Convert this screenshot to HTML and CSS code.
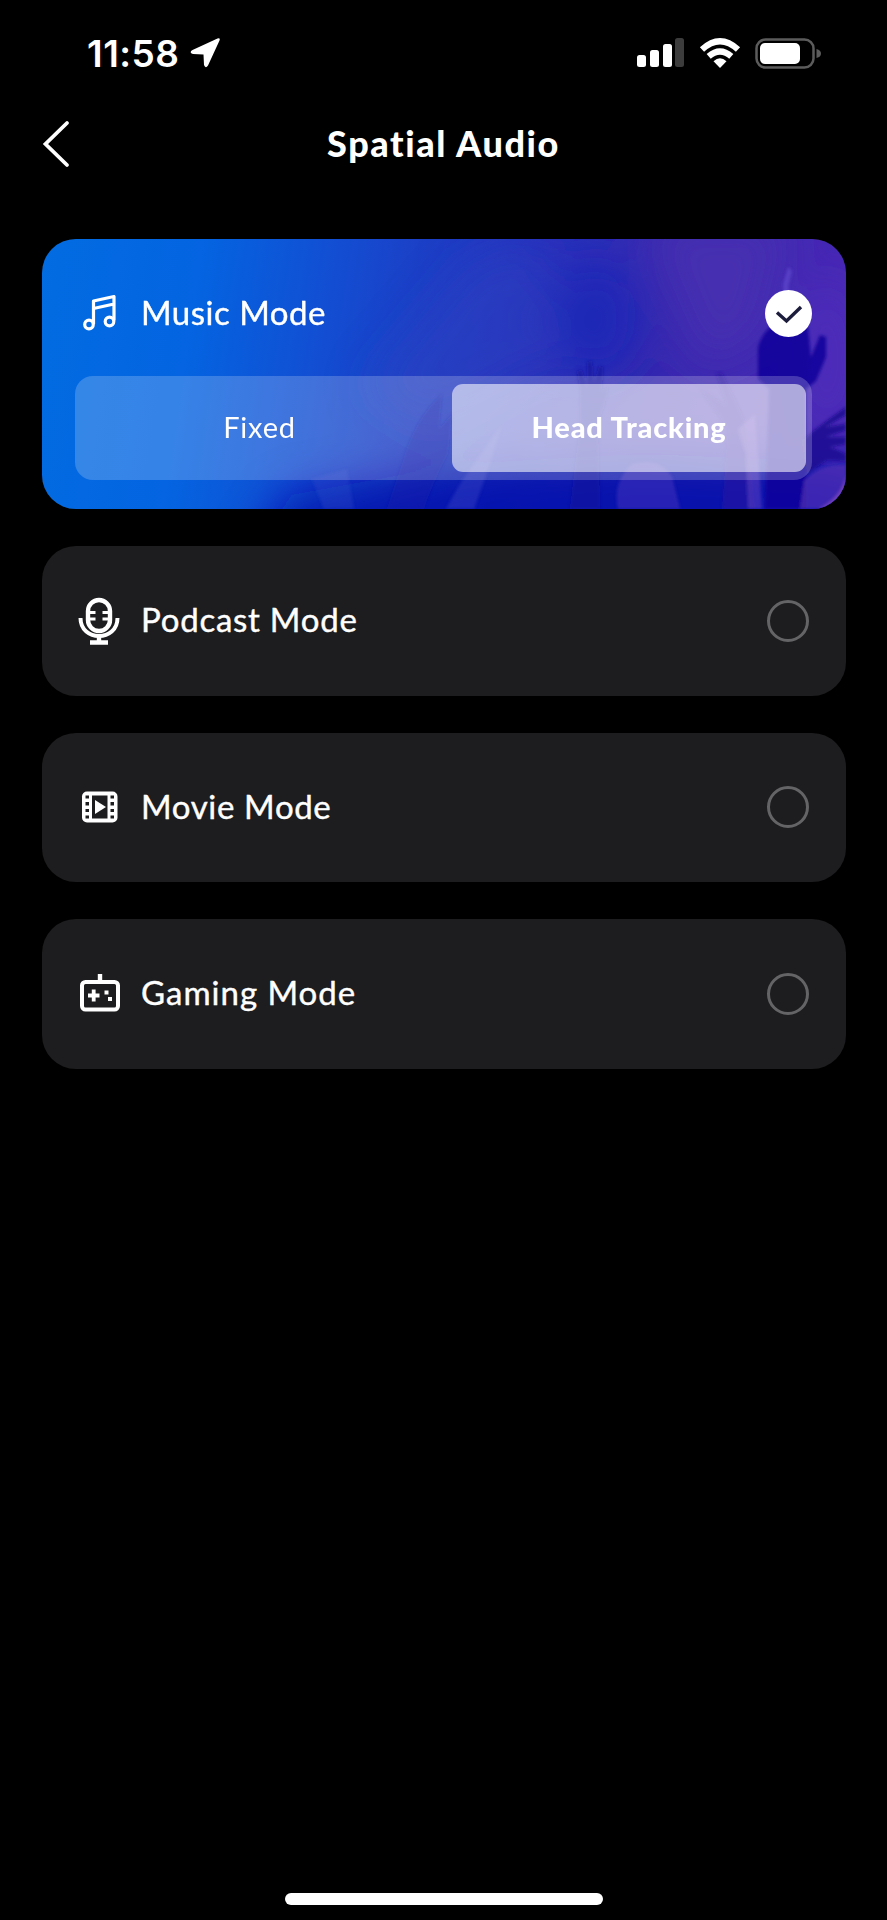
FILE: index.html
```html
<!DOCTYPE html>
<html lang="en">
  <head>
    <meta charset="UTF-8" />
    <title>Spatial Audio</title>
    <link rel="stylesheet" href="styles.css">
  </head>
  <body>
    <div class="screen">
      <div class="status-bar">
        <div class="status-left">
          <span class="time">11:58</span>
          <svg width="32" height="32" viewBox="0 0 32 32"><path d="M28.500 1.500 Q31.500 .5 30.500 3.500 L19 28.500 Q16.500 32 15 28 L14.500 17.500 L4 17 Q-.5 15.500 3.500 13 Z" fill="#fff"/></svg>
        </div>
        <div class="status-right">
          <svg width="47" height="30" viewBox="0 0 47 30">
            <rect x="0" y="17" width="9" height="12" rx="2.500" fill="#fff"/>
            <rect x="13" y="12" width="9" height="17" rx="2.500" fill="#fff"/>
            <rect x="26" y="6" width="9" height="23" rx="2.500" fill="#fff"/>
            <rect x="38" y="0" width="9" height="29" rx="2.500" fill="#3c3c3c"/>
          </svg>
          <svg class="wifi" width="42" height="30" viewBox="0 0 42 30" fill="none" stroke="#fff" stroke-width="6.200">
            <path d="M3 11.500 Q21 -5 39 11.500"/>
            <path d="M9.700 18.400 Q21 8.500 32.300 18.400"/>
            <path d="M14.500 23.200 Q21 17.500 27.500 23.200 L21 30 Z" fill="#fff" stroke="none"/>
          </svg>
          <svg class="battery" width="67" height="31" viewBox="0 0 67 31">
            <rect x="1.500" y="1.500" width="57" height="28" rx="9" fill="none" stroke="#5c5c5c" stroke-width="2.500"/>
            <rect x="5" y="5" width="40" height="21" rx="5" fill="#fff"/>
            <path d="M61.500 11 Q66 12 66 15.500 Q66 19 61.500 20 Z" fill="#5c5c5c"/>
          </svg>
        </div>
      </div>

      <div class="nav">
        <svg class="back" width="28" height="48" viewBox="0 0 28 48"><path d="M25 3 L3.500 24 L25 45" fill="none" stroke="#fff" stroke-width="3.800" stroke-linecap="round"/></svg>
        <h1>Spatial Audio</h1>
      </div>

      <div class="modes">
        <div class="card active">
          <svg class="art" viewBox="0 0 804 270" preserveAspectRatio="none">
            <defs>
              <linearGradient id="base" x1="0" y1="0" x2="1" y2="0.050">
                <stop offset="0" stop-color="#026ce2"/>
                <stop offset=".2" stop-color="#0464e1"/>
                <stop offset=".35" stop-color="#1150d4"/>
                <stop offset=".48" stop-color="#1c3fc6"/>
                <stop offset=".62" stop-color="#2630bc"/>
                <stop offset=".78" stop-color="#3628b0"/>
                <stop offset="1" stop-color="#4728b5"/>
              </linearGradient>
              <filter id="soft" x="-50%" y="-50%" width="200%" height="200%"><feGaussianBlur stdDeviation="22"/></filter>
              <filter id="edge"><feGaussianBlur stdDeviation="1.400"/></filter>
            </defs>
            <rect width="804" height="270" fill="url(#base)"/>
            <g filter="url(#soft)">
              <ellipse cx="555" cy="80" rx="45" ry="60" fill="#1825b6" opacity=".8"/>
              <path d="M600 -20 L750 -20 L720 100 L660 130 Z" fill="#4a31b0" opacity=".75"/>
              <path d="M430 20 L500 0 L520 120 L390 190 L320 150 Z" fill="#3044c0" opacity=".4"/>
              <ellipse cx="785" cy="120" rx="22" ry="80" fill="#5530bf" opacity=".6"/>
              <path d="M210 310 L250 256 L420 225 L600 215 L830 225 L830 310 Z" fill="#0513ac" opacity=".85"/>
            </g>
            <!-- crowd -->
            <g filter="url(#edge)">
              <path d="M270 240 L305 230 L312 270 L282 270 Z" fill="#3a55d0" opacity=".25"/>
              <path d="M404 270 Q420 240 432 225 L460 185 L448 225 L432 270 Z" fill="#4b57ce" opacity=".3"/>
              <path d="M345 270 Q352 246 360 225 Q372 180 400 155 L397 190 L410 175 L406 215 Q390 245 382 270 Z" fill="#1722a9" opacity=".35"/>
              <path d="M538 150 L535 132 L540 131 L545 148 L545 123 L550 122 L552 144 L557 127 L561 128 L560 152 L567 147 L562 168 L556 185 L558 270 L528 270 L538 185 Z" fill="#1a179b" opacity=".55"/>
              <path d="M576 270 Q570 244 590 225 Q618 218 630 238 L638 270 Z" fill="#6342c5" opacity=".35"/>
              <path d="M658 150 L684 166 L674 134 L680 134 L694 162 L702 180 L712 270 L680 270 L686 190 Z" fill="#2416a0" opacity=".55"/>
              <path d="M696 190 L713 175 L720 270 L706 270 L704 215 Z" fill="#7b4fcb" opacity=".4"/>
              <path d="M716 108 Q722 88 740 82 L766 88 L769 118 L778 96 L784 98 L784 118 L774 142 L764 150 L764 270 L723 270 L727 150 L716 140 Z" fill="#12079a" opacity=".85"/>
              <path d="M741 45 L746 28 L750 32 L746 48 L752 70 L742 72 Z" fill="#6550d2" opacity=".6"/>
              <path d="M804 168 L804 176 L783 188 L804 185 L804 191 L784 198 L804 198 L804 205 L788 208 L804 215 L804 222 L785 221 L765 235 L760 202 Q775 188 804 168 Z" fill="#1c0b93" opacity=".9"/>
              <path d="M758 270 L762 242 Q778 224 804 226 L804 270 Z" fill="#5b30b5" opacity=".6"/>
              <path d="M776 270 Q800 258 804 235 L804 270 Z" fill="#9454c2" opacity=".6"/>
            </g>
          </svg>
          <div class="row">
            <svg class="icon" width="46" height="46" viewBox="0 0 46 46" fill="none" stroke="#fff" stroke-width="3.200" stroke-linejoin="round">
              <path d="M17.500 33 V10 L38 5.500 V29.500 M17.500 17.500 L38 13"/>
              <circle cx="13" cy="33.500" r="4.300"/>
              <circle cx="33.500" cy="30.500" r="4.300"/>
            </svg>
            <span class="label music">Music Mode</span>
            <svg class="check" width="47" height="47" viewBox="0 0 47 47">
              <circle cx="23.500" cy="23.500" r="23.500" fill="#fff"/>
              <path d="M12 22.500 L21.500 31 L36 17" fill="none" stroke="#1c1c3c" stroke-width="3.400"/>
            </svg>
          </div>
          <div class="segmented">
            <div class="segment"><span class="fixed">Fixed</span></div>
            <div class="segment selected"><span class="tracking">Head Tracking</span></div>
          </div>
        </div>

        <div class="card">
          <div class="row">
            <svg class="icon" width="46" height="50" viewBox="0 0 46 50" fill="none" stroke="#fff" stroke-width="4.400">
              <rect x="12" y="4" width="22" height="31" rx="11"/>
              <path d="M4.500 22 C4.500 46 41.500 46 41.500 22" stroke-width="4"/>
              <path d="M12 16.500 H19.500 M12 23 H19.500 M26.500 16.500 H34 M26.500 23 H34" stroke-width="3.200"/>
              <path d="M23 39 V46 M14 46.500 H32"/>
            </svg>
            <span class="label podcast">Podcast Mode</span>
            <span class="radio"></span>
          </div>
        </div>

        <div class="card">
          <div class="row">
            <svg class="icon" width="46" height="46" viewBox="0 0 46 46">
              <rect x="6" y="7.500" width="35.500" height="31" rx="5" fill="#fff"/>
              <path d="M16 11.500 H31.500 V34.500 H16 Z M9.500 11.500 H13 V14.500 H9.500 Z M9.500 18 H13 V21.500 H9.500 Z M9.500 25 H13 V28 H9.500 Z M9.500 31.500 H13 V34.500 H9.500 Z M34.500 11.500 H38 V14.500 H34.500 Z M34.500 18 H38 V21.500 H34.500 Z M34.500 25 H38 V28 H34.500 Z M34.500 31.500 H38 V34.500 H34.500 Z" fill="#1d1d1f"/>
              <path d="M19 16 L30 23 L19 30 Z" fill="#fff"/>
            </svg>
            <span class="label movie">Movie Mode</span>
            <span class="radio"></span>
          </div>
        </div>

        <div class="card">
          <div class="row">
            <svg class="icon" width="46" height="46" viewBox="0 0 46 46" fill="none" stroke="#fff" stroke-width="4">
              <rect x="6" y="11" width="36" height="27.500" rx="3.500"/>
              <path d="M24 3 V11" stroke-width="4.400"/>
              <path d="M12 24.500 H23.500 M17.700 18.500 V30.500" stroke-width="3.800"/>
              <path d="M28.500 21.500 H32.500 M32 28 H36" stroke-width="4"/>
            </svg>
            <span class="label gaming">Gaming Mode</span>
            <span class="radio"></span>
          </div>
        </div>
      </div>

      <div class="home-indicator"></div>
    </div>
  </body>
</html>
```

FILE: styles.css
```css
body {
  margin: 0;
  background: #000;
  color: #fff;
  font-family: Lato, "Liberation Sans", sans-serif;
}
.screen {
  display: flex;
  flex-direction: column;
  box-sizing: border-box;
  width: 887px;
  height: 1920px;
  overflow: hidden;
}
svg {
  display: block;
  flex: none;
}
.status-bar {
  display: flex;
  justify-content: space-between;
  align-items: center;
  height: 106px;
  padding: 0 65px 0 87px;
}
.status-left, .status-right {
  display: flex;
  align-items: center;
}
.status-left {
  gap: 9px;
}
.time {
  font-family: Inter, sans-serif;
  font-size: 37px;
  font-weight: 600;
  letter-spacing: 0.5px;
}
.wifi {
  margin-left: 15px;
}
.battery {
  margin-left: 14px;
}
.nav {
  display: grid;
  grid-template-columns: 60px 1fr 60px;
  align-items: center;
  height: 76px;
  padding: 0 42px;
}
h1 {
  margin: 0;
  padding-bottom: 3px;
  font-size: 36px;
  font-weight: 900;
  letter-spacing: 1.6px;
  text-align: center;
  white-space: nowrap;
}
.modes {
  display: flex;
  flex-direction: column;
  gap: 37px;
  padding: 57px 41px 0 42px;
}
.card {
  position: relative;
  height: 149.5px;
  background: #1d1d1f;
  border-radius: 34px;
  overflow: hidden;
}
.card.active {
  height: 270px;
}
.art {
  position: absolute;
  inset: 0;
  width: 100%;
  height: 100%;
}
.row {
  position: relative;
  display: flex;
  align-items: center;
  height: 149px;
  padding: 0 37px 0 34px;
}
.active .row {
  padding-right: 34px;
}
.icon {
  margin-right: 19px;
}
.label {
  flex: 1;
  padding-bottom: 3px;
  font-size: 33px;
  white-space: nowrap;
  -webkit-text-stroke: 0.4px #fff;
}
.music {
  letter-spacing: 0.5px;
}
.podcast {
  letter-spacing: 0.75px;
}
.movie {
  letter-spacing: 0.65px;
}
.gaming {
  letter-spacing: 1px;
}
.radio {
  box-sizing: border-box;
  width: 42px;
  height: 42px;
  border: 3px solid #646466;
  border-radius: 50%;
}
.segmented {
  position: relative;
  display: grid;
  grid-template-columns: 1fr 354px;
  box-sizing: border-box;
  height: 104px;
  margin: -12px 34px 0 33px;
  padding: 8px 6px;
  background: rgba(255, 255, 255, 0.2);
  border-radius: 18px;
}
.segment {
  display: flex;
  align-items: center;
  justify-content: center;
  padding-bottom: 4px;
  font-size: 29px;
  letter-spacing: 0.8px;
}
.fixed {
  padding-right: 14px;
}
.segment.selected {
  background: rgba(255, 255, 255, 0.57);
  border-radius: 11px;
  font-weight: 900;
}
.home-indicator {
  width: 318px;
  height: 12px;
  margin: auto auto 15px;
  background: #fff;
  border-radius: 6px;
}
```
